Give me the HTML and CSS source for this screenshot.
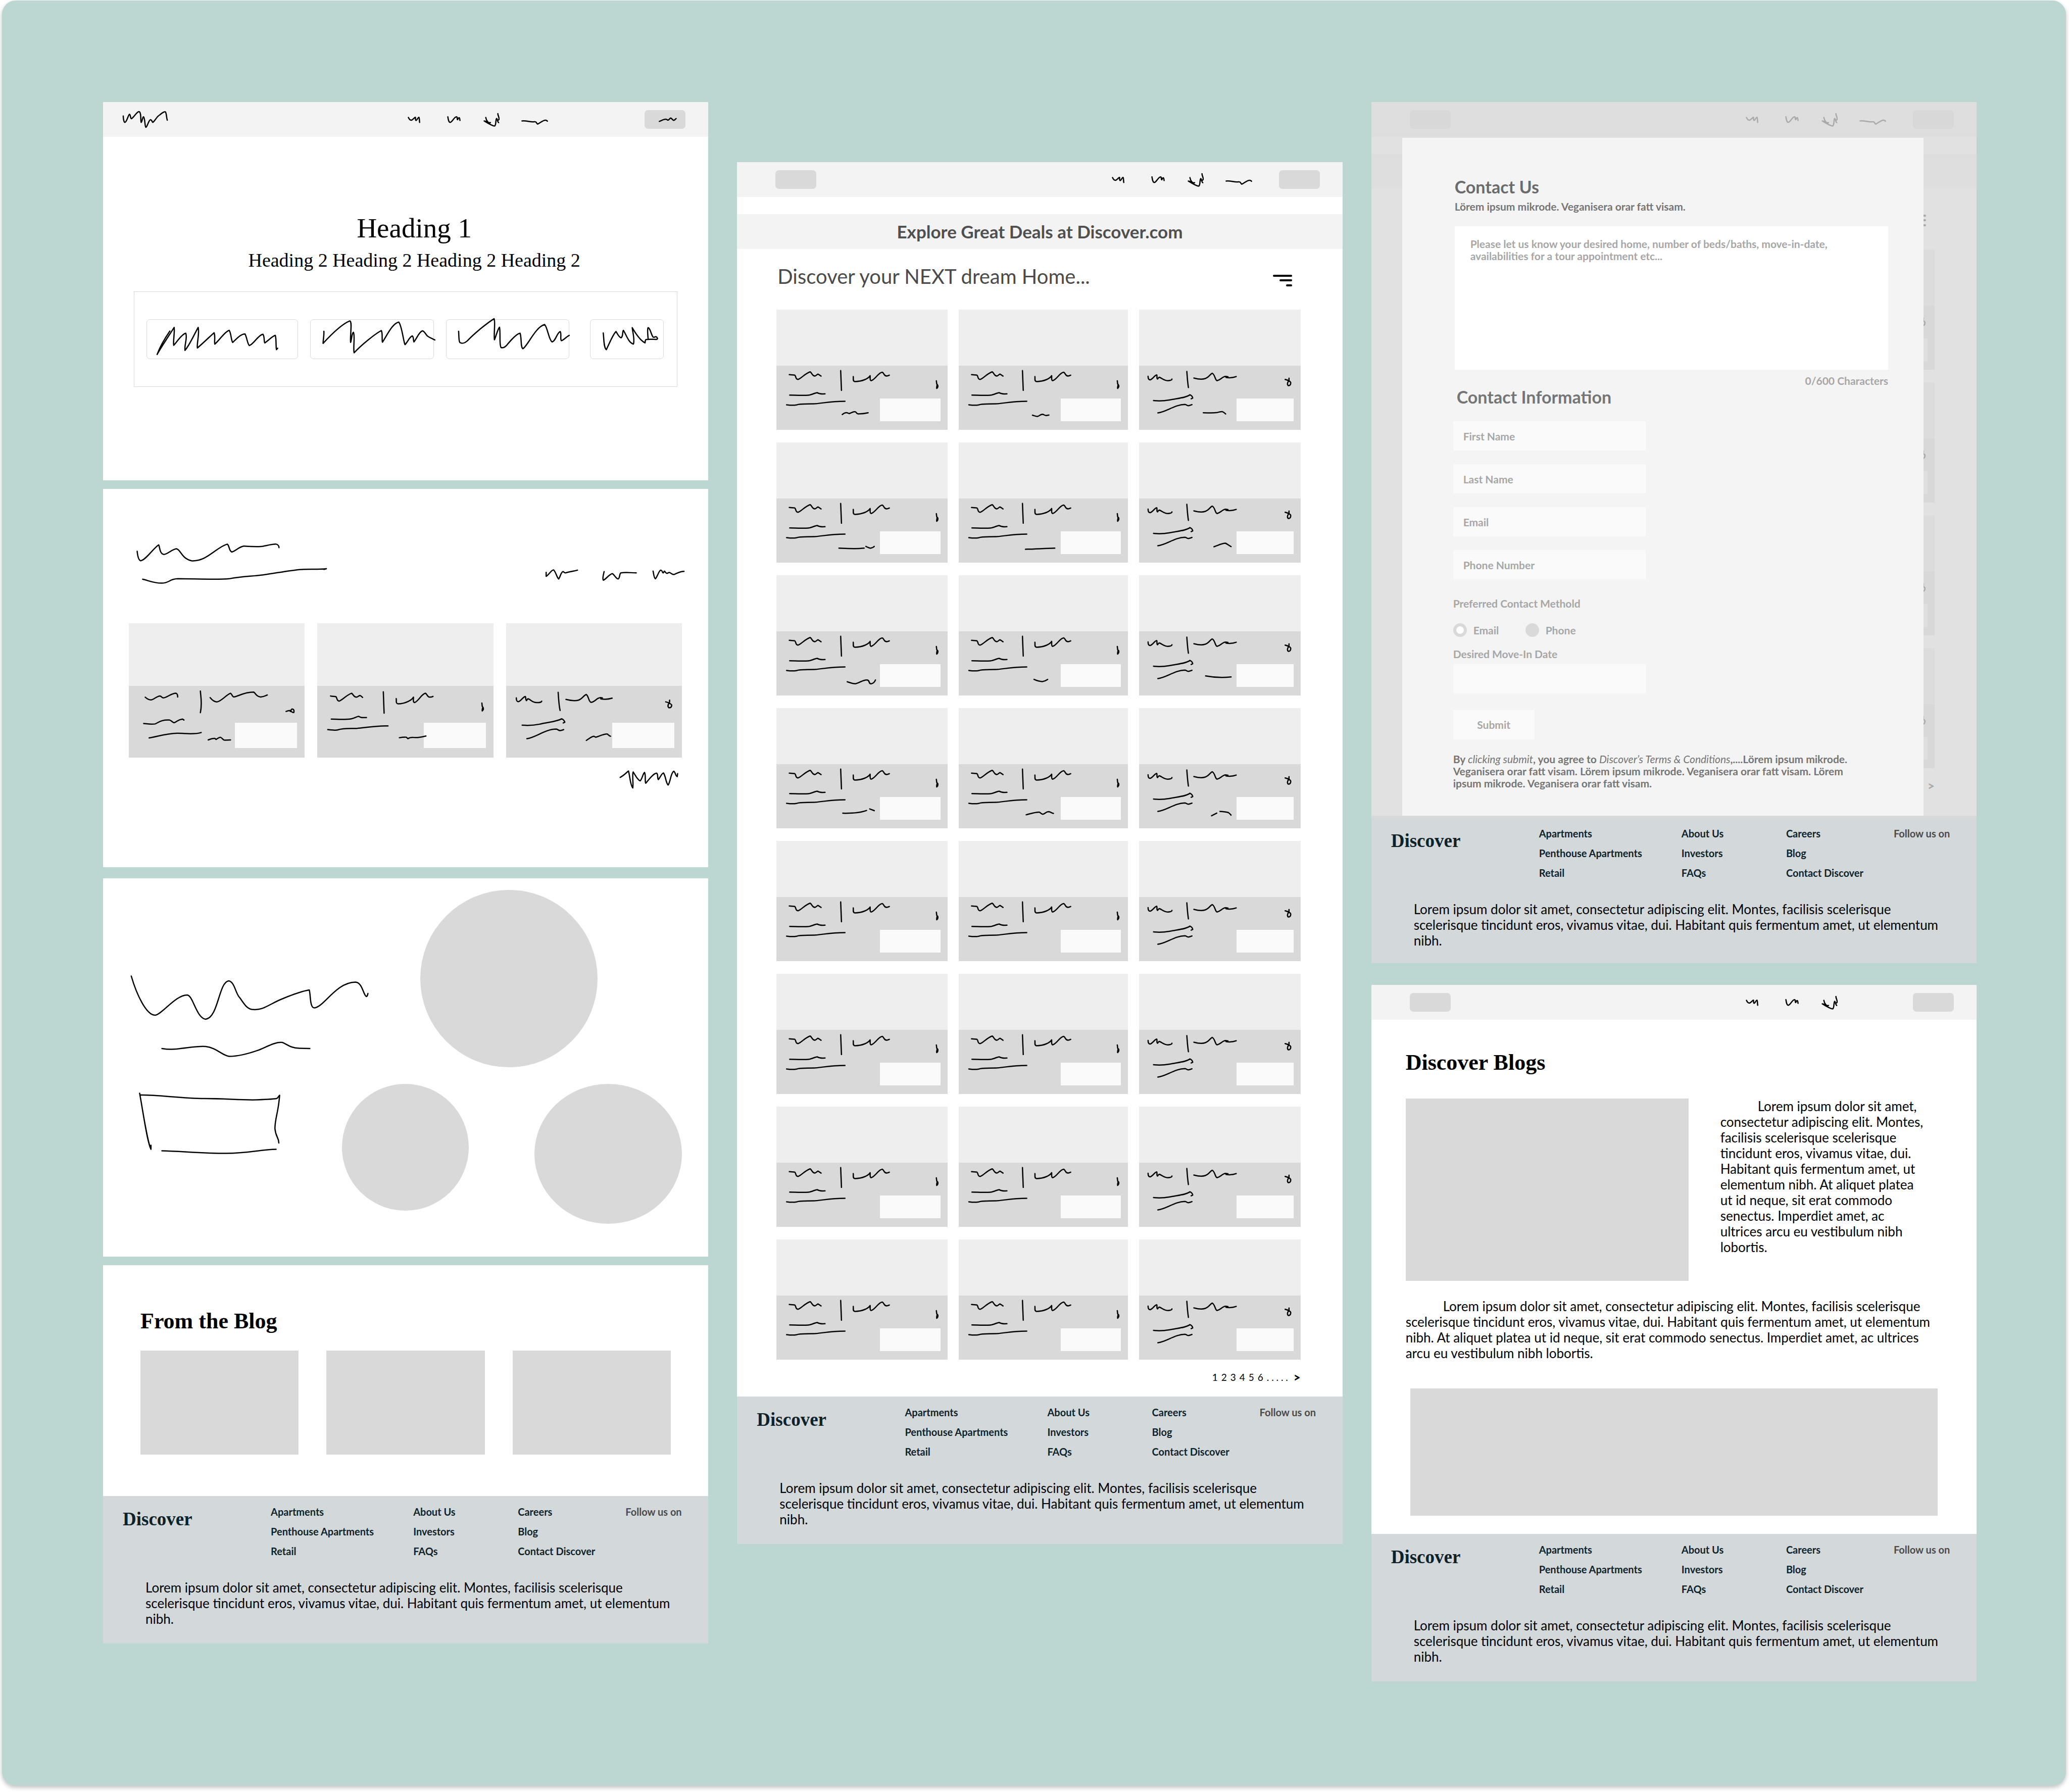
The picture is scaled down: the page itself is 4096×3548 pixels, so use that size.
FILE: index.html
```html
<!DOCTYPE html>
<html lang="en">
<head>
<meta charset="utf-8">
<title>Discover wireframes</title>
<link rel="stylesheet" href="styles.css">
</head>
<body>

<svg class="defs" aria-hidden="true">
  <symbol id="menu-1" viewBox="784 46 34 60" preserveAspectRatio="none"><path d="M786 68C788 74 789 79 793 79C797 80 801 68 804 67C805 70 803 79 806 80C809 79 810 68 813 67C815 70 814 80 815 88"/></symbol>
  <symbol id="menu-2" viewBox="885 46 36 60" preserveAspectRatio="none"><path d="M887 65C888 75 889 88 893 88C899 86 903 65 909 65C913 66 909 76 912 77C913 73 914 69 916 69C918 71 917 76 918 80"/></symbol>
  <symbol id="menu-3" viewBox="978 46 44 60" preserveAspectRatio="none"><path d="M984 68C985 80 990 87 991 90M980 82C985 82 991 92 996 89M981 83C990 92 1003 103 1007 103C1011 99 1009 72 1012 72C1014 76 1014 86 1017 89M1015 52C1015 62 1019 66 1018 76L1015 80"/></symbol>
  <symbol id="menu-4" viewBox="1073 46 71 60" preserveAspectRatio="none"><path d="M1076 82C1088 80 1095 87 1105 86C1115 83 1112 92 1116 95C1122 91 1129 79 1136 79C1139 79 1140 81 1141 83"/></symbol>
  <symbol id="card-a" viewBox="105 1164 436 364" preserveAspectRatio="none"><path d="M138 1215C144 1217 148 1216 152 1218C156 1226 153 1241 160 1242C168 1238 178 1208 191 1199C196 1205 196 1222 203 1223C207 1220 209 1213 211 1212C214 1215 216 1219 219 1223M269 1192L271 1304M301 1226C302 1238 299 1252 305 1254C324 1254 340 1237 344 1221C345 1230 342 1248 347 1249C358 1241 365 1203 375 1201C380 1206 379 1222 386 1223C389 1222 391 1220 393 1218M139 1331C160 1332 175 1335 190 1330C200 1326 204 1317 209 1317C213 1323 217 1326 229 1324M131 1386C141 1389 148 1390 156 1387C166 1378 185 1383 205 1380C228 1375 245 1366 280 1366M513 1250L514 1268C518 1274 518 1286 514 1293C513 1287 515 1280 515 1270"/></symbol>
  <symbol id="card-c" viewBox="1031 1164 412 364" preserveAspectRatio="none"><path d="M1054 1224C1054 1238 1056 1246 1060 1244C1066 1240 1071 1218 1076 1216C1078 1224 1075 1236 1078 1240C1080 1236 1081 1229 1083 1230C1090 1235 1094 1250 1105 1249C1112 1248 1115 1245 1115 1240M1153 1197C1154 1230 1155 1260 1157 1288M1171 1234C1181 1240 1192 1243 1200 1237C1210 1230 1213 1210 1218 1207C1225 1215 1225 1246 1230 1249C1240 1245 1243 1226 1252 1225L1258 1227L1253 1231C1263 1234 1272 1232 1279 1226M1068 1362C1082 1366 1095 1364 1110 1358C1130 1349 1152 1346 1161 1329C1166 1333 1168 1344 1168 1348L1164 1352M1079 1432C1100 1427 1123 1384 1148 1384C1153 1385 1152 1391 1157 1391C1162 1390 1164 1387 1166 1385M1404 1242C1409 1245 1416 1250 1418 1258C1419 1270 1416 1279 1412 1277C1408 1270 1410 1260 1413 1250C1415 1244 1413 1238 1414 1235"/></symbol>
</svg>

<main class="board">

  <div class="column">

    <section class="frame">
      <header class="topbar">
        <svg class="sketch logo" viewBox="57 42 114 68" preserveAspectRatio="none"><path d="M57 62C57 75 59 87 61 88C66 88 70 56 73 55C76 56 75 72 78 73C84 68 92 44 97 44C104 44 101 84 103 88C106 85 106 66 109 65C113 70 112 104 115 108C119 106 122 78 127 77C131 78 131 88 133 88C139 80 143 64 151 57C156 50 163 43 165 45C168 50 168 72 170 79"/></svg>
        <nav class="menu menu-wide">
          <a href="#"><svg class="sketch m1"><use href="#menu-1"/></svg></a>
          <a href="#"><svg class="sketch m2"><use href="#menu-2"/></svg></a>
          <a href="#"><svg class="sketch m3"><use href="#menu-3"/></svg></a>
          <a href="#"><svg class="sketch m4"><use href="#menu-4"/></svg></a>
        </nav>
        <button class="chip" type="button"><svg class="sketch chip-ink" viewBox="1389 39 105 73" preserveAspectRatio="none"><path d="M1427 83C1434 79 1440 73 1445 75C1448 76 1447 79 1450 78C1453 76 1454 70 1456 70C1460 72 1461 79 1464 79C1467 78 1468 74 1470 72"/></svg></button>
      </header>
      <div class="hero">
        <h1>Heading 1</h1>
        <h2>Heading 2 Heading 2 Heading 2 Heading 2</h2>
      </div>
      <div class="search">
        <div class="field"><svg class="sketch" viewBox="116 885 388 161" preserveAspectRatio="none"><path d="M175 932C163 960 150 995 142 1029C150 1005 175 945 186 917C188 935 183 975 185 991C193 978 205 945 216 941C221 960 212 990 214 1012C226 990 238 945 248 917C252 940 244 985 246 1002C260 983 278 955 289 939C293 955 289 975 291 986C303 970 316 935 328 929C333 940 333 970 337 979C347 965 358 943 369 944C374 960 375 985 380 992C392 985 403 948 415 945C420 955 417 975 420 981C430 970 440 952 447 950C450 965 448 995 450 1009L453 1003"/></svg></div>
        <div class="field"><svg class="sketch" viewBox="535 885 316 161" preserveAspectRatio="none"><path d="M569 933C570 950 567 970 567 983C583 955 612 905 636 890C643 895 636 950 638 979C641 965 641 940 645 937C650 950 644 1000 647 1022C665 990 700 945 717 930C721 940 718 970 720 978C730 955 745 900 762 895C770 910 774 975 778 988C784 980 790 955 797 952C801 958 799 970 801 977C808 965 814 935 823 931C829 932 832 950 838 955C843 960 850 964 855 969"/></svg></div>
        <div class="field"><svg class="sketch" viewBox="882 885 315 161" preserveAspectRatio="none"><path d="M913 933C914 950 913 970 916 979C922 986 930 980 935 973C955 940 985 900 1004 881C1008 890 1003 945 1005 968C1009 955 1013 925 1018 916C1021 935 1017 990 1022 1000C1030 1005 1036 993 1040 984C1050 965 1062 943 1071 941C1075 960 1072 1000 1078 1005C1090 995 1110 915 1134 905C1141 915 1145 970 1153 977C1162 975 1165 940 1174 934C1178 945 1173 965 1177 972C1184 968 1190 955 1197 950"/></svg></div>
        <div class="field field-go"><svg class="sketch" viewBox="1250 885 188 161" preserveAspectRatio="none"><path d="M1283 940C1285 965 1284 1000 1291 1009C1297 990 1308 945 1316 934C1320 945 1324 958 1329 960C1335 955 1332 935 1335 929C1342 945 1348 980 1361 986C1365 970 1359 935 1358 918C1366 940 1378 970 1391 981C1392 975 1391 968 1394 967C1405 964 1418 968 1422 966C1425 963 1421 955 1419 955C1416 957 1414 959 1412 957C1406 945 1405 920 1399 918C1396 925 1399 955 1399 965"/></svg></div>
      </div>
    </section>

    <section class="frame featured">
      <div class="featured-head">
        <svg class="sketch featured-title" viewBox="90 220 490 175" preserveAspectRatio="none"><path d="M92 258C93 275 95 294 101 297C115 292 132 248 147 232C150 240 149 268 160 271C170 270 180 251 192 248C203 250 206 290 232 297C270 300 295 240 322 229C328 235 326 258 334 261C344 256 352 240 364 237C385 239 405 241 415 237C430 232 440 228 447 229C452 231 454 238 454 243M106 372C120 377 135 388 154 388C175 388 173 371 196 370C235 370 300 375 327 370C360 360 375 361 405 356C440 350 475 336 512 332C535 330 555 333 575 329L569 332"/></svg>
        <svg class="sketch featured-tabs" viewBox="1130 325 365 70" preserveAspectRatio="none"><path d="M1138 344L1138 360C1145 355 1150 335 1157 334C1163 342 1165 365 1170 371C1174 363 1176 342 1181 341C1184 342 1184 346 1187 346C1197 342 1208 339 1218 335M1286 341C1284 355 1281 370 1284 376C1291 372 1299 351 1307 349C1313 354 1315 368 1322 371C1327 365 1325 347 1329 346C1342 343 1355 346 1368 346M1411 339C1413 352 1413 366 1417 370C1422 362 1426 336 1431 335C1436 337 1434 346 1437 346L1440 339C1443 343 1444 349 1447 348C1450 346 1451 344 1454 345C1458 349 1460 353 1464 353C1472 348 1480 340 1490 340"/></svg>
      </div>
      <div class="featured-cards">
        <article class="card">
          <div class="thumb"></div>
          <div class="info"><button class="cta" type="button"></button>
            <svg class="sketch over" viewBox="71 804 450 292" preserveAspectRatio="none"><path d="M113 850C118 857 122 862 128 861C136 859 142 846 151 845C155 846 155 853 160 853C171 849 180 834 192 834C196 837 196 843 196 849M254 825C255 850 259 875 254 913M279 852C284 862 290 870 297 869C310 864 320 840 331 834C336 838 334 848 340 849C352 846 365 829 390 829C396 834 396 848 408 849C416 848 420 844 425 841M109 957C118 958 125 962 138 959C148 952 155 941 175 943C182 946 181 952 187 954C194 950 197 941 208 939L212 943M123 1016C145 1010 165 998 195 997C215 997 240 1003 256 994M274 1024C280 1020 285 1017 291 1018L294 1022C298 1019 301 1013 305 1013C310 1015 311 1025 316 1025L331 1024M473 908C478 905 482 903 485 905C487 910 490 913 493 912C494 905 493 898 488 898C485 901 486 906 484 908"/></svg></div>
        </article>
        <article class="card">
          <div class="thumb"></div>
          <div class="info"><button class="cta" type="button"></button>
            <svg class="sketch over" viewBox="553 804 450 292" preserveAspectRatio="none"><path d="M587 845C592 847 597 846 601 848C604 854 603 865 609 866C618 862 628 840 641 834C645 838 646 849 653 850C657 849 659 844 662 843C665 845 667 848 669 851M722 828L724 915M755 856C756 865 753 876 760 877C778 877 795 862 799 850C800 855 796 870 802 872C812 866 820 836 830 834C834 838 834 848 840 850C844 850 847 849 849 847M589 939C610 940 625 942 640 938C650 935 655 928 659 928C663 932 665 934 679 933M580 982C590 984 600 986 606 983C618 976 635 978 655 977C680 973 700 967 734 967M763 1015C770 1013 777 1012 781 1013L785 1019C789 1014 793 1013 800 1014C812 1016 820 1012 831 1008M974 874L975 888C979 893 979 901 975 906C974 901 976 896 976 890"/></svg></div>
        </article>
        <article class="card">
          <div class="thumb"></div>
          <div class="info"><button class="cta" type="button"></button>
            <svg class="sketch over" viewBox="1035 804 450 292" preserveAspectRatio="none"><path d="M1061 853C1061 862 1062 869 1067 868C1074 864 1078 849 1084 847C1086 852 1084 860 1087 864C1089 861 1089 855 1092 857C1098 860 1102 873 1114 872C1121 872 1126 869 1126 866M1168 830C1169 855 1170 885 1173 904M1188 859C1198 863 1210 867 1220 862C1230 857 1234 841 1240 839C1246 846 1246 869 1252 871C1262 870 1266 853 1276 852L1281 853L1277 857C1288 860 1298 858 1306 854M1076 964C1090 966 1105 965 1120 960C1140 952 1165 950 1177 938C1181 940 1185 948 1185 952L1181 955M1088 1019C1110 1015 1135 980 1163 980C1168 981 1168 986 1173 986C1178 985 1180 983 1182 982M1240 1026C1247 1019 1253 1010 1259 1009L1264 1013C1273 1009 1285 999 1293 1000C1297 1002 1297 1008 1302 1009M1443 869C1448 871 1455 875 1458 881C1459 888 1456 894 1451 893C1447 888 1449 880 1452 873C1454 868 1452 864 1453 862"/></svg></div>
        </article>
      </div>
      <svg class="sketch featured-more" viewBox="1328 1149 149 72" preserveAspectRatio="none"><path d="M1329 1176C1337 1170 1344 1158 1350 1150C1354 1170 1354 1205 1361 1219C1363 1200 1359 1165 1362 1154C1367 1165 1373 1187 1380 1190C1385 1182 1387 1160 1391 1156C1395 1170 1391 1190 1394 1200C1402 1185 1413 1160 1422 1159C1426 1165 1423 1180 1426 1185C1431 1177 1434 1160 1439 1158C1445 1170 1445 1200 1451 1207C1457 1195 1457 1160 1465 1151C1470 1155 1469 1170 1474 1173L1475 1161"/></svg>
    </section>

    <section class="frame frame-spaced about">
      <div class="about-copy">
        <svg class="sketch about-title" viewBox="72 400 616 180" preserveAspectRatio="none"><path d="M77 405C90 475 115 560 138 560C155 558 190 480 220 480C235 482 243 570 267 576C300 570 300 430 326 424C342 428 343 475 355 492C365 515 373 534 385 537C415 543 430 515 465 494C490 478 512 465 532 460C536 480 533 530 545 531C570 528 600 430 650 429C668 430 670 480 678 486C681 485 681 480 682 474"/></svg>
        <svg class="sketch about-sub" viewBox="150 660 390 70" preserveAspectRatio="none"><path d="M156 692C175 697 190 696 208 691C230 687 250 682 268 684C295 688 310 720 328 723C355 723 385 708 405 697C425 685 445 665 464 668C475 674 483 690 508 691L534 692"/></svg>
        <svg class="sketch about-box" viewBox="92 865 372 250" preserveAspectRatio="none"><path d="M99 870C108 945 118 1060 128 1092L128 1076M100 877C150 876 200 890 265 891C320 891 360 898 400 896C430 894 445 893 449 891C454 888 454 881 457 878C454 945 445 970 445 1010C447 1045 455 1045 455 1067M156 1098C200 1099 260 1108 320 1108C380 1108 405 1093 448 1092"/></svg>
      </div>
      <div class="about-art">
        <div class="disc disc-lg"></div>
        <div class="disc-row"><div class="disc disc-sm"></div><div class="disc disc-md"></div></div>
      </div>
    </section>

    <section class="frame">
      <div class="posts">
        <h2 class="title">From the Blog</h2>
        <div class="post-grid"><div></div><div></div><div></div></div>
      </div>
      <footer class="footer">
        <div class="footer-top">
          <div class="brand">Discover</div>
          <ul><li><a href="#">Apartments</a></li><li><a href="#">Penthouse Apartments</a></li><li><a href="#">Retail</a></li></ul>
          <ul><li><a href="#">About Us</a></li><li><a href="#">Investors</a></li><li><a href="#">FAQs</a></li></ul>
          <ul><li><a href="#">Careers</a></li><li><a href="#">Blog</a></li><li><a href="#">Contact Discover</a></li></ul>
          <div class="follow">Follow us on</div>
        </div>
        <p class="body-text">Lorem ipsum dolor sit amet, consectetur adipiscing elit. Montes, facilisis scelerisque<br>scelerisque tincidunt eros, vivamus vitae, dui. Habitant quis fermentum amet, ut elementum<br>nibh.</p>
      </footer>
    </section>
  </div>

  <div class="column column-low">
    <section class="frame">
      <header class="topbar topbar-inset">
        <button class="chip" type="button"></button>
        <nav class="menu">
          <a href="#"><svg class="sketch m1"><use href="#menu-1"/></svg></a>
          <a href="#"><svg class="sketch m2"><use href="#menu-2"/></svg></a>
          <a href="#"><svg class="sketch m3"><use href="#menu-3"/></svg></a>
          <a href="#"><svg class="sketch m4"><use href="#menu-4"/></svg></a>
        </nav>
        <button class="chip" type="button"></button>
      </header>
      <div class="banner">Explore Great Deals at Discover.com</div>
      <div class="listing">
        <div class="listing-head">
          <h2>Discover your NEXT dream Home...</h2>
          <svg class="filter" viewBox="0 0 38 26"><path d="M2 2H36M15 11H36M28 21H36"/></svg>
        </div>
        <div class="listing-grid">
          <article class="card"><div class="thumb"></div><div class="info"><button class="cta" type="button"></button><svg class="sketch over"><use href="#card-a"/></svg><svg class="sketch over" viewBox="105 1164 436 364" preserveAspectRatio="none"><path d="M273 1441C277 1434 280 1430 285 1431L291 1436C296 1432 300 1425 306 1425C310 1428 308 1437 314 1438C325 1437 333 1434 339 1431"/></svg></div></article>
          <article class="card"><div class="thumb"></div><div class="info"><button class="cta" type="button"></button><svg class="sketch over"><use href="#card-a"/></svg><svg class="sketch over" viewBox="571 1164 432 364" preserveAspectRatio="none"><path d="M759 1445C764 1448 768 1453 772 1452C777 1449 779 1440 785 1440C788 1441 789 1446 794 1447L801 1444"/></svg></div></article>
          <article class="card"><div class="thumb"></div><div class="info"><button class="cta" type="button"></button><svg class="sketch over"><use href="#card-c"/></svg><svg class="sketch over" viewBox="1031 1164 412 364" preserveAspectRatio="none"><path d="M1195 1431C1208 1432 1222 1433 1230 1430C1236 1427 1240 1424 1244 1425C1248 1428 1250 1434 1252 1438"/></svg></div></article>

          <article class="card"><div class="thumb"></div><div class="info"><button class="cta" type="button"></button><svg class="sketch over"><use href="#card-a"/></svg><svg class="sketch over" viewBox="22 442 489 363" preserveAspectRatio="none"><path d="M201 723C225 725 250 728 273 723M278 713C284 719 288 723 292 723C297 721 300 717 302 713"/></svg></div></article>
          <article class="card"><div class="thumb"></div><div class="info"><button class="cta" type="button"></button><svg class="sketch over"><use href="#card-a"/></svg><svg class="sketch over" viewBox="545 442 485 363" preserveAspectRatio="none"><path d="M736 729C765 728 790 724 820 723"/></svg></div></article>
          <article class="card"><div class="thumb"></div><div class="info"><button class="cta" type="button"></button><svg class="sketch over"><use href="#card-c"/></svg><svg class="sketch over" viewBox="1061 442 463 363" preserveAspectRatio="none"><path d="M1276 715C1288 707 1297 696 1309 695C1315 700 1318 708 1325 714"/></svg></div></article>

          <article class="card"><div class="thumb"></div><div class="info"><button class="cta" type="button"></button><svg class="sketch over"><use href="#card-a"/></svg><svg class="sketch over" viewBox="18 1193 490 363" preserveAspectRatio="none"><path d="M221 1478C230 1484 238 1491 246 1489C258 1484 265 1467 278 1468C287 1471 281 1488 289 1490C295 1489 300 1478 302 1468"/></svg></div></article>
          <article class="card"><div class="thumb"></div><div class="info"><button class="cta" type="button"></button><svg class="sketch over"><use href="#card-a"/></svg><svg class="sketch over" viewBox="542 1193 484 363" preserveAspectRatio="none"><path d="M757 1465C765 1472 774 1478 782 1477C789 1475 793 1469 796 1465"/></svg></div></article>
          <article class="card"><div class="thumb"></div><div class="info"><button class="cta" type="button"></button><svg class="sketch over"><use href="#card-c"/></svg><svg class="sketch over" viewBox="1058 1193 463 363" preserveAspectRatio="none"><path d="M1249 1445C1270 1453 1300 1455 1322 1451"/></svg></div></article>

          <article class="card"><div class="thumb"></div><div class="info"><button class="cta" type="button"></button><svg class="sketch over"><use href="#card-a"/></svg><svg class="sketch over" viewBox="22 363 489 374" preserveAspectRatio="none"><path d="M212 649C240 650 262 647 280 633M289 624L302 634"/></svg></div></article>
          <article class="card"><div class="thumb"></div><div class="info"><button class="cta" type="button"></button><svg class="sketch over"><use href="#card-a"/></svg><svg class="sketch over" viewBox="545 363 485 374" preserveAspectRatio="none"><path d="M738 658C752 651 765 642 776 643C780 646 780 654 786 655C792 652 795 640 802 640C808 641 810 647 816 650"/></svg></div></article>
          <article class="card"><div class="thumb"></div><div class="info"><button class="cta" type="button"></button><svg class="sketch over"><use href="#card-c"/></svg><svg class="sketch over" viewBox="1061 363 463 374" preserveAspectRatio="none"><path d="M1269 664L1284 648M1293 638C1303 640 1312 641 1317 645C1321 650 1323 655 1325 660"/></svg></div></article>

          <article class="card"><div class="thumb"></div><div class="info"><button class="cta" type="button"></button><svg class="sketch over"><use href="#card-a"/></svg></div></article>
          <article class="card"><div class="thumb"></div><div class="info"><button class="cta" type="button"></button><svg class="sketch over"><use href="#card-a"/></svg></div></article>
          <article class="card"><div class="thumb"></div><div class="info"><button class="cta" type="button"></button><svg class="sketch over"><use href="#card-c"/></svg></div></article>

          <article class="card"><div class="thumb"></div><div class="info"><button class="cta" type="button"></button><svg class="sketch over"><use href="#card-a"/></svg></div></article>
          <article class="card"><div class="thumb"></div><div class="info"><button class="cta" type="button"></button><svg class="sketch over"><use href="#card-a"/></svg></div></article>
          <article class="card"><div class="thumb"></div><div class="info"><button class="cta" type="button"></button><svg class="sketch over"><use href="#card-c"/></svg></div></article>

          <article class="card"><div class="thumb"></div><div class="info"><button class="cta" type="button"></button><svg class="sketch over"><use href="#card-a"/></svg></div></article>
          <article class="card"><div class="thumb"></div><div class="info"><button class="cta" type="button"></button><svg class="sketch over"><use href="#card-a"/></svg></div></article>
          <article class="card"><div class="thumb"></div><div class="info"><button class="cta" type="button"></button><svg class="sketch over"><use href="#card-c"/></svg></div></article>

          <article class="card"><div class="thumb"></div><div class="info"><button class="cta" type="button"></button><svg class="sketch over"><use href="#card-a"/></svg></div></article>
          <article class="card"><div class="thumb"></div><div class="info"><button class="cta" type="button"></button><svg class="sketch over"><use href="#card-a"/></svg></div></article>
          <article class="card"><div class="thumb"></div><div class="info"><button class="cta" type="button"></button><svg class="sketch over"><use href="#card-c"/></svg></div></article>
        </div>
        <nav class="pages">
          <a href="#">1</a><a href="#">2</a><a href="#">3</a><a href="#">4</a><a href="#">5</a><a href="#">6</a><span>. . . . .</span><a class="next" href="#">&gt;</a>
        </nav>
      </div>
      <footer class="footer">
        <div class="footer-top">
          <div class="brand">Discover</div>
          <ul><li><a href="#">Apartments</a></li><li><a href="#">Penthouse Apartments</a></li><li><a href="#">Retail</a></li></ul>
          <ul><li><a href="#">About Us</a></li><li><a href="#">Investors</a></li><li><a href="#">FAQs</a></li></ul>
          <ul><li><a href="#">Careers</a></li><li><a href="#">Blog</a></li><li><a href="#">Contact Discover</a></li></ul>
          <div class="follow">Follow us on</div>
        </div>
        <p class="body-text">Lorem ipsum dolor sit amet, consectetur adipiscing elit. Montes, facilisis scelerisque<br>scelerisque tincidunt eros, vivamus vitae, dui. Habitant quis fermentum amet, ut elementum<br>nibh.</p>
      </footer>
    </section>
  </div>

  <div class="column">
    <section class="frame contact">
      <div class="stage">
        <div class="backdrop">
          <header class="topbar topbar-inset">
            <button class="chip" type="button"></button>
            <nav class="menu">
              <a href="#"><svg class="sketch m1"><use href="#menu-1"/></svg></a>
              <a href="#"><svg class="sketch m2"><use href="#menu-2"/></svg></a>
              <a href="#"><svg class="sketch m3"><use href="#menu-3"/></svg></a>
              <a href="#"><svg class="sketch m4"><use href="#menu-4"/></svg></a>
            </nav>
            <button class="chip" type="button"></button>
          </header>
          <div class="banner"></div>
          <div class="listing">
            <div class="listing-head">
              <svg class="filter" viewBox="0 0 38 26"><path d="M2 2H36M15 11H36M28 21H36"/></svg>
            </div>
            <div class="backdrop-cards">
              <article class="card"><div class="thumb"></div><div class="info"><button class="cta" type="button"></button><svg class="sketch over"><use href="#card-c"/></svg></div></article>
              <article class="card"><div class="thumb"></div><div class="info"><button class="cta" type="button"></button><svg class="sketch over"><use href="#card-c"/></svg></div></article>
              <article class="card"><div class="thumb"></div><div class="info"><button class="cta" type="button"></button><svg class="sketch over"><use href="#card-c"/></svg></div></article>
              <article class="card"><div class="thumb"></div><div class="info"><button class="cta" type="button"></button><svg class="sketch over"><use href="#card-c"/></svg></div></article>
            </div>
            <nav class="pages"><a class="next" href="#">&gt;</a></nav>
          </div>
        </div>
        <form class="dialog">
          <div class="message">
            <h2>Contact Us</h2>
            <label for="message">Lörem ipsum mikrode. Veganisera orar fatt visam.</label>
            <textarea id="message" placeholder="Please let us know your desired home, number of beds/baths, move-in-date, availabilities for a tour appointment etc..."></textarea>
            <div class="count">0/600 Characters</div>
            <h3>Contact Information</h3>
          </div>
          <div class="details">
            <div class="inputs">
              <input type="text" aria-label="First Name" placeholder="First Name">
              <input type="text" aria-label="Last Name" placeholder="Last Name">
              <input type="email" aria-label="Email" placeholder="Email">
              <input type="tel" aria-label="Phone Number" placeholder="Phone Number">
            </div>
            <fieldset>
              <legend>Preferred Contact Methold</legend>
              <div class="choices">
                <label><input type="radio" name="method" checked>Email</label>
                <label><input type="radio" name="method">Phone</label>
              </div>
            </fieldset>
            <label class="date-label" for="date">Desired Move-In Date</label>
            <input id="date" type="text">
            <button class="submit" type="submit">Submit</button>
            <p class="terms">By <em>clicking submit</em>, you agree to <em>Discover’s Terms &amp; Conditions</em>,....Lörem ipsum mikrode.<br>Veganisera orar fatt visam. Lörem ipsum mikrode. Veganisera orar fatt visam. Lörem<br>ipsum mikrode. Veganisera orar fatt visam.</p>
          </div>
        </form>
      </div>
      <footer class="footer footer-edged">
        <div class="footer-top">
          <div class="brand">Discover</div>
          <ul><li><a href="#">Apartments</a></li><li><a href="#">Penthouse Apartments</a></li><li><a href="#">Retail</a></li></ul>
          <ul><li><a href="#">About Us</a></li><li><a href="#">Investors</a></li><li><a href="#">FAQs</a></li></ul>
          <ul><li><a href="#">Careers</a></li><li><a href="#">Blog</a></li><li><a href="#">Contact Discover</a></li></ul>
          <div class="follow">Follow us on</div>
        </div>
        <p class="body-text">Lorem ipsum dolor sit amet, consectetur adipiscing elit. Montes, facilisis scelerisque<br>scelerisque tincidunt eros, vivamus vitae, dui. Habitant quis fermentum amet, ut elementum<br>nibh.</p>
      </footer>
    </section>

    <section class="frame frame-apart">
      <header class="topbar topbar-inset">
        <button class="chip" type="button"></button>
        <nav class="menu">
          <a href="#"><svg class="sketch m1"><use href="#menu-1"/></svg></a>
          <a href="#"><svg class="sketch m2"><use href="#menu-2"/></svg></a>
          <a href="#"><svg class="sketch m3"><use href="#menu-3"/></svg></a>
        </nav>
        <button class="chip" type="button"></button>
      </header>
      <div class="blog">
        <h2 class="title">Discover Blogs</h2>
        <div class="blog-lead">
          <div class="blog-photo"></div>
          <p class="body-text indent">Lorem ipsum dolor sit amet,<br>consectetur adipiscing elit. Montes,<br>facilisis scelerisque scelerisque<br>tincidunt eros, vivamus vitae, dui.<br>Habitant quis fermentum amet, ut<br>elementum nibh. At aliquet platea<br>ut id neque, sit erat commodo<br>senectus. Imperdiet amet, ac<br>ultrices arcu eu vestibulum nibh<br>lobortis.</p>
        </div>
        <p class="body-text indent">Lorem ipsum dolor sit amet, consectetur adipiscing elit. Montes, facilisis scelerisque<br>scelerisque tincidunt eros, vivamus vitae, dui. Habitant quis fermentum amet, ut elementum<br>nibh. At aliquet platea ut id neque, sit erat commodo senectus. Imperdiet amet, ac ultrices<br>arcu eu vestibulum nibh lobortis.</p>
        <div class="blog-wide"></div>
      </div>
      <footer class="footer">
        <div class="footer-top">
          <div class="brand">Discover</div>
          <ul><li><a href="#">Apartments</a></li><li><a href="#">Penthouse Apartments</a></li><li><a href="#">Retail</a></li></ul>
          <ul><li><a href="#">About Us</a></li><li><a href="#">Investors</a></li><li><a href="#">FAQs</a></li></ul>
          <ul><li><a href="#">Careers</a></li><li><a href="#">Blog</a></li><li><a href="#">Contact Discover</a></li></ul>
          <div class="follow">Follow us on</div>
        </div>
        <p class="body-text">Lorem ipsum dolor sit amet, consectetur adipiscing elit. Montes, facilisis scelerisque<br>scelerisque tincidunt eros, vivamus vitae, dui. Habitant quis fermentum amet, ut elementum<br>nibh.</p>
      </footer>
    </section>
  </div>

</main>
</body>
</html>
```

FILE: styles.css
```css
:root {
  --mint: #bcd7d2;
  --bar: #f3f3f3;
  --light: #eeeeee;
  --grey: #d9d9d9;
  --paper: #fafafa;
  --slate: #d3d8da;
  --navy: #0e2329;
  --serif: "Liberation Serif", serif;
}

* { box-sizing: border-box; }

body {
  margin: 0;
  background: #fff;
  color: #000;
  font-family: Lato, sans-serif;
}

h1, h2, h3, p, ul, fieldset { margin: 0; padding: 0; border: 0; }
h1, h2, h3 { font-weight: 400; }
ul { list-style: none; }
a { color: inherit; text-decoration: none; }
button, input, textarea { margin: 0; border: 0; padding: 0; font: inherit; border-radius: 0; }
svg { display: block; }
.defs { position: absolute; width: 0; height: 0; }

/* Pen strokes keep one weight whatever size the drawing takes */
path { vector-effect: non-scaling-stroke; }
.sketch, .filter {
  fill: none;
  stroke: #000;
  stroke-width: 2.5;
  stroke-linecap: round;
  stroke-linejoin: round;
  overflow: visible;
}
.over { position: absolute; inset: 0; width: 100%; height: 100%; pointer-events: none; }

/* Board */
.board {
  display: flex;
  align-items: flex-start;
  gap: 57px;
  margin: 1px 6px 13px 4px;
  padding: 201px 177px 206px 200px;
  background: var(--mint);
  border-radius: 27px;
  box-shadow: 0 4px 8px rgba(0, 0, 0, .25);
}
.column { flex: 1; min-width: 0; display: flex; flex-direction: column; gap: 17px; }
.column-low { margin-top: 119px; }
.frame { background: #fff; min-height: 749px; }
.frame-spaced { margin-top: 5px; }
.frame-apart { margin-top: 26px; }

/* Top bar */
.topbar {
  display: flex;
  align-items: center;
  height: 69px;
  padding: 0 45px 0 40px;
  background: var(--bar);
}
.topbar-inset { padding-left: 76px; }
.logo { width: 88px; height: 33px; }
.menu {
  display: grid;
  grid-template-columns: 78px 72px 74px 52px;
  margin-left: auto;
  margin-right: 55px;
}
.menu-wide { margin-right: 193px; }
.menu svg { height: 29px; }
.m1 { width: 26px; }
.m2 { width: 28px; }
.m3 { width: 34px; }
.m4 { width: 55px; }
.chip { width: 81px; height: 37px; border-radius: 7px; background: var(--grey); }
.chip-ink { width: 81px; height: 37px; }

/* Hero */
.hero { padding: 149px 0 38px 34px; text-align: center; font-family: var(--serif); }
.hero h1 { font-size: 55px; line-height: 64px; }
.hero h2 { margin-top: 7px; font-size: 38px; line-height: 48px; }
.search {
  display: grid;
  grid-template-columns: 300fr 245fr 245fr 163fr;
  gap: 24px;
  margin: 0 61px;
  padding: 54px 26px 54px 24px;
  border: 1px solid var(--grey);
}
.field { height: 79px; border: 1px solid var(--grey); border-radius: 7px; }
.field svg { width: 100%; height: 100%; }
.field-go { margin-left: 17px; }

/* Property cards */
.thumb { height: 111px; background: var(--light); }
.info {
  position: relative;
  display: flex;
  align-items: flex-end;
  justify-content: flex-end;
  height: 127px;
  padding: 0 14px 17px 0;
  background: var(--grey);
}
.cta { width: 37%; height: 45px; background: var(--paper); }

.featured { padding: 105px 52px 0 51px; }
.featured-head { display: flex; justify-content: space-between; align-items: flex-end; margin-bottom: 76px; padding-left: 15px; }
.featured-title { width: 380px; height: 85px; }
.featured-tabs { width: 283px; height: 34px; margin-right: -8px; }
.featured-cards { display: grid; grid-template-columns: repeat(3, 1fr); gap: 25px; }
.featured .thumb { height: 124px; }
.featured .info { height: 142px; padding: 0 15px 19px 0; }
.featured .cta { height: 50px; }
.featured-more { width: 116px; height: 35px; margin: 26px 7px 0 auto; }

/* Circles */
.about { display: flex; padding-left: 52px; }
.about-copy { width: 421px; padding-top: 191px; }
.about-title { width: 477px; height: 90px; }
.about-sub { width: 302px; height: 35px; margin: 40px 0 0 60px; }
.about-box { width: 288px; height: 125px; margin: 67px 0 0 15px; }
.about-art { flex: 1; padding: 23px 52px 0 0; }
.disc { border-radius: 50%; background: var(--grey); }
.disc-lg { width: 351px; height: 351px; margin-left: 155px; }
.disc-row { display: flex; justify-content: space-between; margin-top: 33px; }
.disc-sm { width: 251px; height: 251px; }
.disc-md { width: 292px; height: 277px; }

/* Blog teasers */
.title { font: bold 44px/52px var(--serif); }
.posts { padding: 85px 74px 82px; }
.post-grid { display: grid; grid-template-columns: repeat(3, 1fr); gap: 55px; margin-top: 32px; }
.post-grid div { height: 206px; background: var(--grey); }

/* Footer */
.footer { padding: 19px 47px 33px 39px; background: var(--slate); }
.footer-edged { padding-bottom: 29px; border-top: 4px solid #d8dad9; }
.footer-top {
  display: grid;
  grid-template-columns: 293fr 282fr 207fr 213fr 117fr;
  color: var(--navy);
  font-size: 20px;
  font-weight: 700;
  line-height: 24px;
  white-space: nowrap;
}
.footer ul { display: grid; gap: 15px; }
.brand { margin-top: 5px; font: bold 37px/44px var(--serif); }
.follow { color: #4a4a4a; }
.body-text { font-size: 26px; line-height: 31px; white-space: nowrap; }
.footer .body-text { margin: 45px 0 0 45px; }
.indent { text-indent: 74px; }

/* Listing */
.banner {
  height: 69px;
  margin-top: 34px;
  background: var(--bar);
  color: #4f4f4f;
  font-size: 35px;
  font-weight: 700;
  line-height: 69px;
  text-align: center;
}
.listing { padding: 31px 83px 26px 78px; }
.listing-head { display: flex; justify-content: space-between; align-items: flex-end; height: 46px; margin-bottom: 43px; padding: 0 17px 0 2px; }
.listing-head h2 { color: #4a4a4a; font-size: 40px; line-height: 46px; }
.filter { width: 38px; height: 26px; margin-left: auto; stroke-width: 4; }
.listing-grid { display: grid; grid-template-columns: 338fr 335fr 319fr; gap: 25px 22px; }
.pages { display: flex; justify-content: flex-end; gap: 7px; margin-top: 23px; font-size: 19px; line-height: 24px; }
.next { margin-left: 4px; font-size: 24px; font-weight: 900; }

/* Contact dialog over the dimmed listing */
.stage { display: grid; background: #e1e1e1; }
.backdrop, .dialog { grid-area: 1 / 1; }
.backdrop { --bar: #dedede; --light: #dcdcdc; --grey: #d8d8d8; --paper: #dfdfdf; }
.backdrop .sketch, .backdrop .filter { stroke: #a9a9a9; }
.backdrop .pages { color: #a9a9a9; }
.backdrop-cards { display: grid; gap: 25px; width: 319px; margin-left: auto; }
.backdrop .listing { padding-bottom: 0; }

.dialog {
  position: relative;
  margin: 71px 105px 0 61px;
  padding: 77px 70px 52px 101px;
  background: #f4f4f4;
  color: #a6a6a6;
  font-size: 21px;
  font-weight: 700;
  line-height: 24px;
}
.message { padding-left: 3px; }
.dialog h2, .dialog h3 { font-size: 34px; font-weight: 700; line-height: 40px; color: #757575; }
.dialog h2 { color: #6b6b6b; }
.dialog h3 { padding-left: 4px; }
.message label { display: block; margin-top: 7px; color: #757575; }
textarea { display: block; width: 100%; height: 284px; margin-top: 27px; padding: 23px 31px; background: #fff; resize: none; }
::placeholder { color: #a6a6a6; opacity: 1; }
.count { margin-top: 10px; text-align: right; }
.inputs { display: grid; gap: 27px; margin-top: 28px; }
.details input:not([type="radio"]) { display: block; width: 381px; height: 58px; padding: 0 20px; background: var(--paper); }
legend { padding: 0; }
fieldset { margin-top: 36px; }
.choices { display: flex; margin-top: 27px; }
.choices label { display: flex; align-items: center; gap: 13px; width: 143px; height: 27px; }
input[type="radio"] { appearance: none; width: 27px; height: 27px; border-radius: 50%; background: var(--grey); }
input[type="radio"]:checked { border: 6px solid var(--grey); background: #fff; }
.date-label { display: block; margin: 22px 0 8px; }
.submit { display: block; width: 161px; height: 58px; margin: 33px 0 27px; background: var(--paper); color: inherit; }
.terms { color: #757575; white-space: nowrap; }
.terms em { font-weight: 400; }

/* Blog page */
.blog { padding: 59px 68px 36px; }
.blog-lead { display: grid; grid-template-columns: 560px 1fr; gap: 63px; margin: 45px 0 35px; }
.blog-photo { height: 361px; background: var(--grey); }
.blog-wide { height: 252px; margin: 54px 9px 0; background: var(--grey); }
```
